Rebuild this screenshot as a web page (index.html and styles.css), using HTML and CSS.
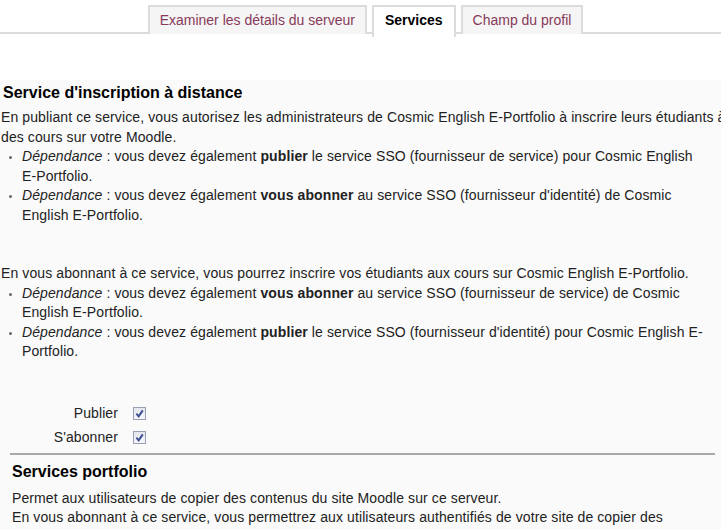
FILE: index.html
```html
<!DOCTYPE html>
<html lang="fr">
<head>
<meta charset="UTF-8" />
<title>Services</title>
<link rel="stylesheet" href="styles.css">
</head>
<body>
  <div class="tabtree">
    <ul class="tabs">
      <li><a href="#">Examiner les détails du serveur</a></li>
      <li class="here"><a href="#">Services</a></li>
      <li><a href="#">Champ du profil</a></li>
    </ul>
  </div>

  <div class="panel">
    <div class="service first">
      <h3>Service d'inscription à distance</h3>
      <p>En publiant ce service, vous autorisez les administrateurs de Cosmic English E-Portfolio à inscrire leurs étudiants à des cours sur votre Moodle.</p>
      <ul class="deps">
        <li><em>Dépendance</em> : vous devez également <strong>publier</strong> le service SSO (fournisseur de service) pour Cosmic English E-Portfolio.</li>
        <li><em>Dépendance</em> : vous devez également <strong>vous abonner</strong> au service SSO (fournisseur d'identité) de Cosmic English E-Portfolio.</li>
      </ul>
      <p class="sub">En vous abonnant à ce service, vous pourrez inscrire vos étudiants aux cours sur Cosmic English E-Portfolio.</p>
      <ul class="deps">
        <li><em>Dépendance</em> : vous devez également <strong>vous abonner</strong> au service SSO (fournisseur de service) de Cosmic English E-Portfolio.</li>
        <li><em>Dépendance</em> : vous devez également <strong>publier</strong> le service SSO (fournisseur d'identité) pour Cosmic English E-Portfolio.</li>
      </ul>
      <div class="options">
        <label>Publier</label>
        <span class="check"><svg viewBox="0 0 10 10" aria-hidden="true"><path d="M2.2 5.2 L4.2 7.6 L8 2.2"/></svg></span>
        <label>S'abonner</label>
        <span class="check"><svg viewBox="0 0 10 10" aria-hidden="true"><path d="M2.2 5.2 L4.2 7.6 L8 2.2"/></svg></span>
      </div>
    </div>

    <div class="service second">
      <h3>Services portfolio</h3>
      <p>Permet aux utilisateurs de copier des contenus du site Moodle sur ce serveur.<br>
      En vous abonnant à ce service, vous permettrez aux utilisateurs authentifiés de votre site de copier des contenus sur Cosmic English E-Portfolio.</p>
    </div>
  </div>
</body>
</html>
```

FILE: styles.css
```css
:root {
  --text: #222;
  --tab-link: #883a5a;
  --tab-bg: #f5f5f5;
  --tab-border: #dcdcdc;
  --panel-bg: #fafafa;
}
html, body {
  margin: 0;
  overflow: hidden;
  background: #fff;
}
body {
  font-family: "Liberation Sans", Arial, sans-serif;
  font-size: 14px;
  letter-spacing: 0.1px;
  color: var(--text);
  width: 721px;
  height: 530px;
}
.tabtree {
  padding-top: 5px;
  border-bottom: 2px solid var(--tab-border);
  height: 27px;
}
.tabs {
  list-style: none;
  margin: 0;
  padding: 0;
  display: flex;
  justify-content: center;
  gap: 5px;
  margin-left: 10px;
}
.tabs li {
  background: var(--tab-bg);
  border: 2px solid var(--tab-border);
  border-bottom: none;
  height: 27px;
}
.tabs li.here {
  background: #fff;
  height: 30px;
  position: relative;
  z-index: 1;
}
.tabs a {
  display: block;
  padding: 6px 10px;
  line-height: 15px;
  color: var(--tab-link);
  text-decoration: none;
  letter-spacing: 0;
}
.tabs li.here a {
  color: #000;
  font-weight: bold;
  padding: 6px 11px;
}
.panel {
  margin-top: 46px;
  background: var(--panel-bg);
  padding-top: 3px;
  height: 460px;
}
.service {
  width: 745px;
}
.service h3 {
  font-size: 16px;
  letter-spacing: 0;
  line-height: 20px;
  margin: 0 0 5px 3px;
  color: #000;
}
.service p {
  margin: 0 0 0 1px;
  line-height: 19.5px;
}
.service p.sub {
  margin-top: 39px;
}
.deps {
  margin: 0;
  padding-left: 22px;
  line-height: 19.5px;
  width: 685px;
}
.deps li::marker {
  color: #666;
  font-size: 10px;
}
.options {
  display: grid;
  grid-template-columns: 118px auto;
  justify-content: start;
  column-gap: 15px;
  row-gap: 9px;
  align-items: center;
  margin-top: 44px;
  line-height: 15px;
}
.options label {
  text-align: right;
}
.check {
  width: 11px;
  height: 11px;
  border: 1px solid #9aa0b4;
  background: linear-gradient(#e4e6ee, #f6f7fa);
  display: flex;
}
.check svg {
  width: 11px;
  height: 11px;
  fill: none;
  stroke: #3f4f8f;
  stroke-width: 1.8;
}
.second {
  margin: 8px 6px 0 10px;
  border-top: 2px solid #a8a8a8;
  width: 705px;
}
.second h3 {
  margin: 7px 0 7px 2px;
}
.second p {
  margin-left: 2px;
}
```
